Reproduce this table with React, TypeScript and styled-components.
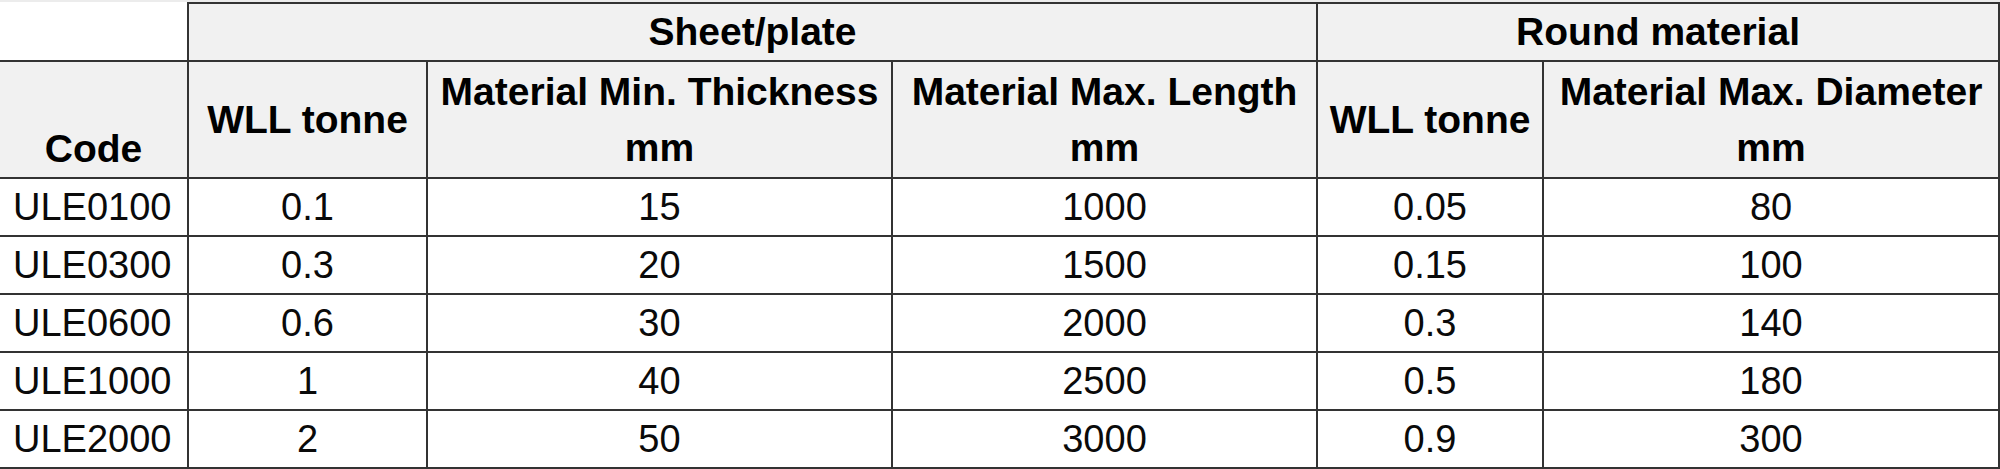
import React from 'react';
import styled, {createGlobalStyle} from 'styled-components';

const GlobalStyle = createGlobalStyle`
    html, body {
        margin: 0;
        padding: 0;
        background: #ffffff;
    }
    body {
        font-family: "Liberation Sans", Arial, sans-serif;
        color: #000;
    }
`;

type Row = [string, string, string, string, string, string];

const rows: Row[] = [
    ['ULE0100', '0.1', '15', '1000', '0.05', '80'],
    ['ULE0300', '0.3', '20', '1500', '0.15', '100'],
    ['ULE0600', '0.6', '30', '2000', '0.3', '140'],
    ['ULE1000', '1', '40', '2500', '0.5', '180'],
    ['ULE2000', '2', '50', '3000', '0.9', '300'],
];

const widths = [188, 239, 465, 425, 226, 456];

const Page = styled.div`
    width: 2000px;
    border-top: 2px solid #ececec;
`;

const Table = styled.table`
    width: 2000px;
    table-layout: fixed;
    border-collapse: collapse;
    border-spacing: 0;
    border-bottom: 2px solid #ececec;
`;

const GroupRow = styled.tr`
    height: 58px;
`;

const HeadRow = styled.tr`
    height: 117px;
`;

const DataRow = styled.tr`
    height: 58px;
`;

const Corner = styled.th`
    background: #ffffff;
    border: none;
`;

const GroupCell = styled.th`
    background: #f1f1f1;
    border: 2px solid #333;
    font-size: 39px;
    font-weight: 700;
    line-height: 56px;
    padding: 0;
    text-align: center;
    vertical-align: middle;
`;

const HeadCell = styled.th<{$bottom?: boolean; $first?: boolean}>`
    background: #f1f1f1;
    border: 2px solid #333;
    border-left: ${p => (p.$first ? 'none' : '2px solid #333')};
    font-size: 39px;
    font-weight: 700;
    line-height: 56px;
    padding: 0;
    text-align: center;
    vertical-align: ${p => (p.$bottom ? 'bottom' : 'middle')};
    white-space: nowrap;
`;

const Cell = styled.td<{$code?: boolean}>`
    border: 2px solid #333;
    border-left: ${p => (p.$code ? 'none' : '2px solid #333')};
    font-size: 38px;
    font-weight: 400;
    line-height: 44px;
    padding: 0 0 0 ${p => (p.$code ? '13px' : '0')};
    text-align: ${p => (p.$code ? 'left' : 'center')};
    vertical-align: middle;
    color: #0a0a0a;
`;

export default function App() {
    return <Page>
        <GlobalStyle/>
        <Table>
            <colgroup>
                {widths.map((w, i) => <col key={i} style={{width: w}}/>)}
            </colgroup>
            <thead>
                <GroupRow>
                    <Corner/>
                    <GroupCell colSpan={3}>Sheet/plate</GroupCell>
                    <GroupCell colSpan={2}>Round material</GroupCell>
                </GroupRow>
                <HeadRow>
                    <HeadCell $first $bottom>Code</HeadCell>
                    <HeadCell>WLL tonne</HeadCell>
                    <HeadCell>Material Min. Thickness<br/>mm</HeadCell>
                    <HeadCell>Material Max. Length<br/>mm</HeadCell>
                    <HeadCell>WLL tonne</HeadCell>
                    <HeadCell>Material Max. Diameter<br/>mm</HeadCell>
                </HeadRow>
            </thead>
            <tbody>
                {rows.map(r => <DataRow key={r[0]}>
                    {r.map((v, i) => <Cell key={i} $code={i === 0}>{v}</Cell>)}
                </DataRow>)}
            </tbody>
        </Table>
    </Page>;
}
